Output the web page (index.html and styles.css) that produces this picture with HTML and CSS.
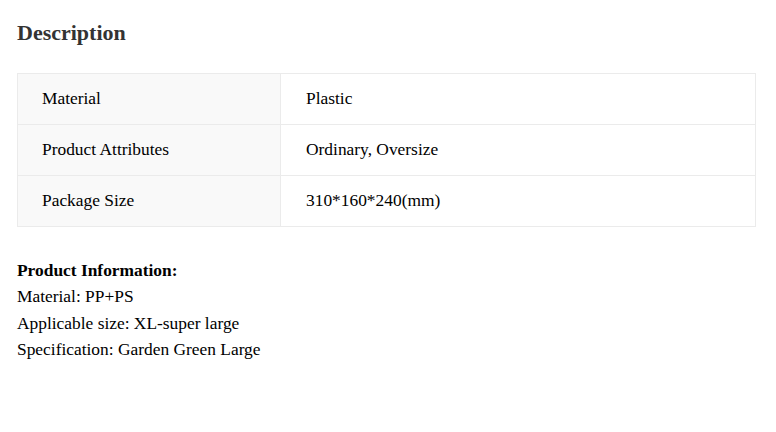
FILE: index.html
```html
<!DOCTYPE html>
<html>
<head>
<meta charset="utf-8">
<link rel="stylesheet" href="styles.css">
</head>
<body>
<div class="page">
  <h2 class="title">Description</h2>
  <table class="spec">
    <tr><td class="key">Material</td><td class="val">Plastic</td></tr>
    <tr><td class="key">Product Attributes</td><td class="val">Ordinary, Oversize</td></tr>
    <tr><td class="key">Package Size</td><td class="val">310*160*240(mm)</td></tr>
  </table>
  <div class="info">
    <div class="info-title">Product Information:</div>
    <div>Material: PP+PS</div>
    <div>Applicable size: XL-super large</div>
    <div>Specification: Garden Green Large</div>
  </div>
</div>
</body>
</html>
```
FILE: styles.css
```css
html, body { margin: 0; padding: 0; background: #fff; }
body { font-family: "Liberation Serif", "Times New Roman", serif; color: #000; font-size: 17.4px; }
.page { padding: 18px 20px 0 17px; }
.title { margin: 0; font-size: 22px; line-height: 30px; font-weight: bold; color: #333; }
.spec { margin-top: 25px; width: 739px; border-collapse: collapse; border: 1px solid #ebebeb; }
.spec td { border: 1px solid #ebebeb; padding: 15px 24px 17px 24px; line-height: 18px; height: 18px; }
.spec .val { padding-left: 25px; }
.spec .key { width: 214px; background: #f9f9f9; }
.info { margin-top: 30px; line-height: 26.4px; }
.info-title { font-weight: bold; }
```
